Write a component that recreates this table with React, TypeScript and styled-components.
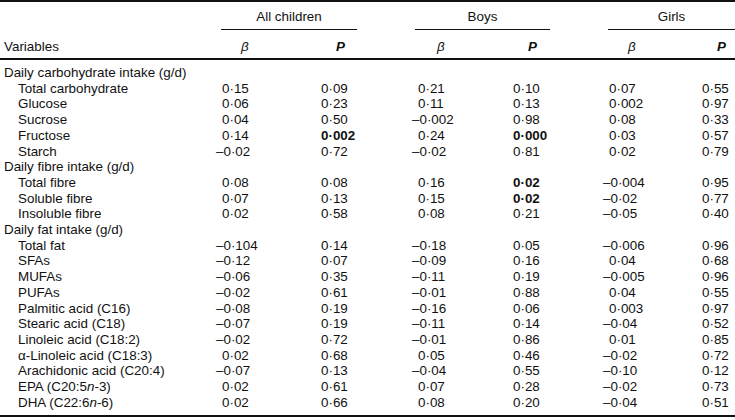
import styled, { createGlobalStyle } from 'styled-components';

const GlobalStyle = createGlobalStyle`
  html, body {
    margin: 0;
    padding: 0;
    background: #ffffff;
  }
  body {
    font-family: 'Liberation Sans', Arial, sans-serif;
    color: #111111;
  }
`;

type Row = { label: string; indent?: boolean; values?: string[]; bold?: number[] };

// values: all β, all P, boys β, boys P, girls β, girls P
const rows: Row[] = [
  { label: 'Daily carbohydrate intake (g/d)' },
  { label: 'Total carbohydrate', indent: true, values: ['0·15', '0·09', '0·21', '0·10', '0·07', '0·55'] },
  { label: 'Glucose', indent: true, values: ['0·06', '0·23', '0·11', '0·13', '0·002', '0·97'] },
  { label: 'Sucrose', indent: true, values: ['0·04', '0·50', '–0·002', '0·98', '0·08', '0·33'] },
  { label: 'Fructose', indent: true, values: ['0·14', '0·002', '0·24', '0·000', '0·03', '0·57'], bold: [1, 3] },
  { label: 'Starch', indent: true, values: ['–0·02', '0·72', '–0·02', '0·81', '0·02', '0·79'] },
  { label: 'Daily fibre intake (g/d)' },
  { label: 'Total fibre', indent: true, values: ['0·08', '0·08', '0·16', '0·02', '–0·004', '0·95'], bold: [3] },
  { label: 'Soluble fibre', indent: true, values: ['0·07', '0·13', '0·15', '0·02', '–0·02', '0·77'], bold: [3] },
  { label: 'Insoluble fibre', indent: true, values: ['0·02', '0·58', '0·08', '0·21', '–0·05', '0·40'] },
  { label: 'Daily fat intake (g/d)' },
  { label: 'Total fat', indent: true, values: ['–0·104', '0·14', '–0·18', '0·05', '–0·006', '0·96'] },
  { label: 'SFAs', indent: true, values: ['–0·12', '0·07', '–0·09', '0·16', '0·04', '0·68'] },
  { label: 'MUFAs', indent: true, values: ['–0·06', '0·35', '–0·11', '0·19', '–0·005', '0·96'] },
  { label: 'PUFAs', indent: true, values: ['–0·02', '0·61', '–0·01', '0·88', '0·04', '0·55'] },
  { label: 'Palmitic acid (C16)', indent: true, values: ['–0·08', '0·19', '–0·16', '0·06', '0·003', '0·97'] },
  { label: 'Stearic acid (C18)', indent: true, values: ['–0·07', '0·19', '–0·11', '0·14', '–0·04', '0·52'] },
  { label: 'Linoleic acid (C18:2)', indent: true, values: ['–0·02', '0·72', '–0·01', '0·86', '0·01', '0·85'] },
  { label: 'α-Linoleic acid (C18:3)', indent: true, values: ['0·02', '0·68', '0·05', '0·46', '–0·02', '0·72'] },
  { label: 'Arachidonic acid (C20:4)', indent: true, values: ['–0·07', '0·13', '–0·04', '0·55', '–0·10', '0·12'] },
  { label: 'EPA (C20:5n-3)', indent: true, values: ['0·02', '0·61', '0·07', '0·28', '–0·02', '0·73'] },
  { label: 'DHA (C22:6n-6)', indent: true, values: ['0·02', '0·66', '0·08', '0·20', '–0·04', '0·51'] },
];

const colWidths = [222, 99, 97, 95, 96, 93, 33];

const groups = [
  { name: 'All children', lead: -1, trim: 61 },
  { name: 'Boys', lead: -3, trim: 59 },
  { name: 'Girls', lead: -1, trim: 0 },
];

function Label({ text }: { text: string }) {
  // italicise the n in n-3 / n-6
  const m = text.match(/^(.*\d)n(-\d\))$/);
  if (!m) return <>{text}</>;
  return (
    <>
      {m[1]}
      <em>n</em>
      {m[2]}
    </>
  );
}

function Value({ v, bold }: { v: string; bold?: boolean }) {
  const neg = v.startsWith('–');
  return (
    <Num $bold={bold}>
      {neg && <Minus>–</Minus>}
      {neg ? v.slice(1) : v}
    </Num>
  );
}

export default function App() {
  return (
    <>
      <GlobalStyle />
      <Table>
        <colgroup>
          {colWidths.map((w, i) => (
            <col key={i} style={{ width: w }} />
          ))}
        </colgroup>
        <thead>
          <GroupRow>
            <th />
            {groups.map((g) => (
              <GroupCell key={g.name} colSpan={2}>
                <GroupLabel $lead={g.lead} $trim={g.trim}>
                  {g.name}
                </GroupLabel>
              </GroupCell>
            ))}
          </GroupRow>
          <HeadRow>
            <HeadLabel>Variables</HeadLabel>
            {groups.map((g) => [
              <HeadStat key={g.name + 'b'} $inset={19}>
                <Beta>β</Beta>
              </HeadStat>,
              <HeadStat key={g.name + 'p'} $inset={15}>
                <PSym>P</PSym>
              </HeadStat>,
            ])}
          </HeadRow>
        </thead>
        <tbody>
          {rows.map((r, i) => (
            <BodyRow key={i} $first={i === 0} $last={i === rows.length - 1}>
              <RowLabel $indent={r.indent}>
                <Label text={r.label} />
              </RowLabel>
              {r.values
                ? r.values.map((v, j) => (
                    <ValueCell key={j}>
                      <Value v={v} bold={r.bold?.includes(j)} />
                    </ValueCell>
                  ))
                : colWidths.slice(1).map((_, j) => <ValueCell key={j} />)}
            </BodyRow>
          ))}
        </tbody>
      </Table>
    </>
  );
}

const Table = styled.table`
  width: 735px;
  table-layout: fixed;
  border-collapse: separate;
  border-spacing: 0;
  border-top: 2px solid #111111;
  border-bottom: 2px solid #111111;
  font-size: 13.4px;
`;

const GroupRow = styled.tr`
  th {
    padding: 0;
  }
`;

const GroupCell = styled.th`
  padding: 0;
  font-weight: 400;
  vertical-align: bottom;
`;

const GroupLabel = styled.div<{ $lead: number; $trim: number }>`
  margin-left: ${({ $lead }) => $lead}px;
  margin-right: ${({ $trim }) => $trim}px;
  padding: 7px 0 5px;
  line-height: 15px;
  text-align: center;
  border-bottom: 1px solid #111111;
`;

const HeadRow = styled.tr`
  th {
    border-bottom: 2px solid #111111;
  }
`;

const HeadLabel = styled.th`
  text-align: left;
  font-weight: 400;
  padding: 9px 0 4px 4px;
  line-height: 15px;
  vertical-align: bottom;
`;

const HeadStat = styled.th<{ $inset: number }>`
  text-align: left;
  font-weight: 400;
  padding: 9px 0 4px ${({ $inset }) => $inset}px;
  line-height: 15px;
  vertical-align: bottom;
`;

const Beta = styled.span`
  font-style: italic;
`;

const PSym = styled.span`
  font-style: italic;
  font-weight: 700;
`;

const BodyRow = styled.tr<{ $first?: boolean; $last?: boolean }>`
  td {
    padding-top: ${({ $first }) => ($first ? 5 : 0)}px;
    padding-bottom: ${({ $last }) => ($last ? 5 : 0)}px;
  }
`;

const RowLabel = styled.td<{ $indent?: boolean }>`
  padding-left: ${({ $indent }) => ($indent ? 18 : 4)}px;
  padding-right: 0;
  line-height: 15.7px;
  white-space: nowrap;
`;

const ValueCell = styled.td`
  padding-left: 0;
  padding-right: 0;
  line-height: 15.7px;
  white-space: nowrap;
`;

const Num = styled.span<{ $bold?: boolean }>`
  font-weight: ${({ $bold }) => ($bold ? 700 : 400)};
`;

const Minus = styled.span`
  display: inline-block;
  margin-left: -6px;
`;
